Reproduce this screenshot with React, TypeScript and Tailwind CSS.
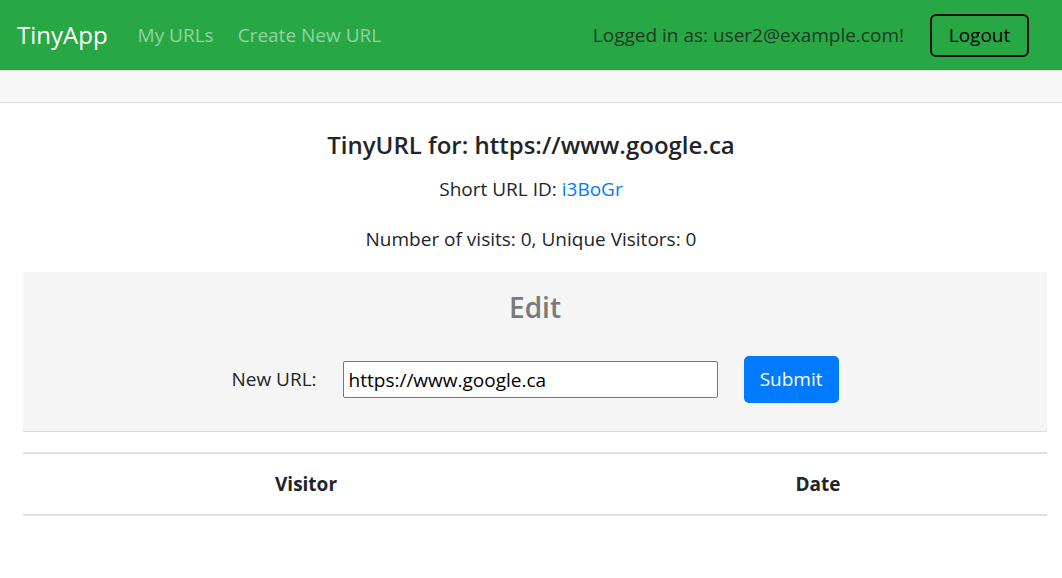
import React from 'react'

const font = { fontFamily: '"Open Sans", "Noto Sans", sans-serif' }

function Navbar() {
  return (
    <nav className="h-[70px] bg-[#28a745] flex items-center px-[17px]">
      <span className="text-[24px] text-white mr-[30px] leading-[36px]">TinyApp</span>
      <a className="text-[19px] text-[#93d3a3] mr-[24px]">My URLs</a>
      <a className="text-[19px] text-[#93d3a3]">Create New URL</a>
      <span className="ml-auto text-[19px] text-[#1d3a25] mr-[26px]">Logged in as: user2@example.com!</span>
      <button className="h-[43px] w-[99px] mr-[16px] border-2 border-[#111] rounded-[6px] text-[19px] text-black">
        Logout
      </button>
    </nav>
  )
}

export default function App() {
  return (
    <div className="w-[1062px] h-[578px] bg-white text-[#212529] overflow-hidden" style={font}>
      <Navbar />
      {/* empty card header */}
      <div className="h-[33px] bg-[#f7f7f7] border-t border-b border-[#dcdcdc]" />

      <div className="pt-[24px] text-center">
        <h5 className="text-[24px] font-semibold leading-[36px]">TinyURL for: https://www.google.ca</h5>
        <p className="text-[19px] leading-[30px] mt-[11px]">
          Short URL ID: <a className="text-[#007bff]">i3BoGr</a>
        </p>
        <p className="text-[19px] leading-[30px] mt-[20px]">Number of visits: 0, Unique Visitors: 0</p>
      </div>

      <div className="ml-[23px] mr-[15px] mt-[18px]">
        {/* edit panel */}
        <div className="h-[160px] bg-[#f5f5f5] border-b border-[#dcdcdc] flex flex-col items-center">
          <h4 className="mt-[17px] text-[28px] font-semibold leading-[36px] text-[#7a7a7a]">Edit</h4>
          <form className="mt-[31px] flex items-center gap-[26px]">
            <label className="text-[19px] text-[#212529]">New URL:</label>
            <input
              defaultValue="https://www.google.ca"
              className="w-[375px] h-[37px] px-[5px] bg-white border border-[#767676] rounded-[2px] text-[19px] text-black outline-none"
              style={font}
            />
            <button
              type="button"
              className="w-[95px] h-[47px] bg-[#007bff] rounded-[5px] text-white text-[19px]"
            >
              Submit
            </button>
          </form>
        </div>

        {/* visits table */}
        <table className="w-full mt-[20px] border-collapse">
          <thead>
            <tr>
              <th className="w-[566px] h-[62px] border-t-2 border-b-2 border-[#dee2e6] text-[19px] font-bold text-center">
                Visitor
              </th>
              <th className="h-[62px] border-t-2 border-b-2 border-[#dee2e6] text-[19px] font-bold text-center">
                Date
              </th>
            </tr>
          </thead>
          <tbody />
        </table>
      </div>
    </div>
  )
}
